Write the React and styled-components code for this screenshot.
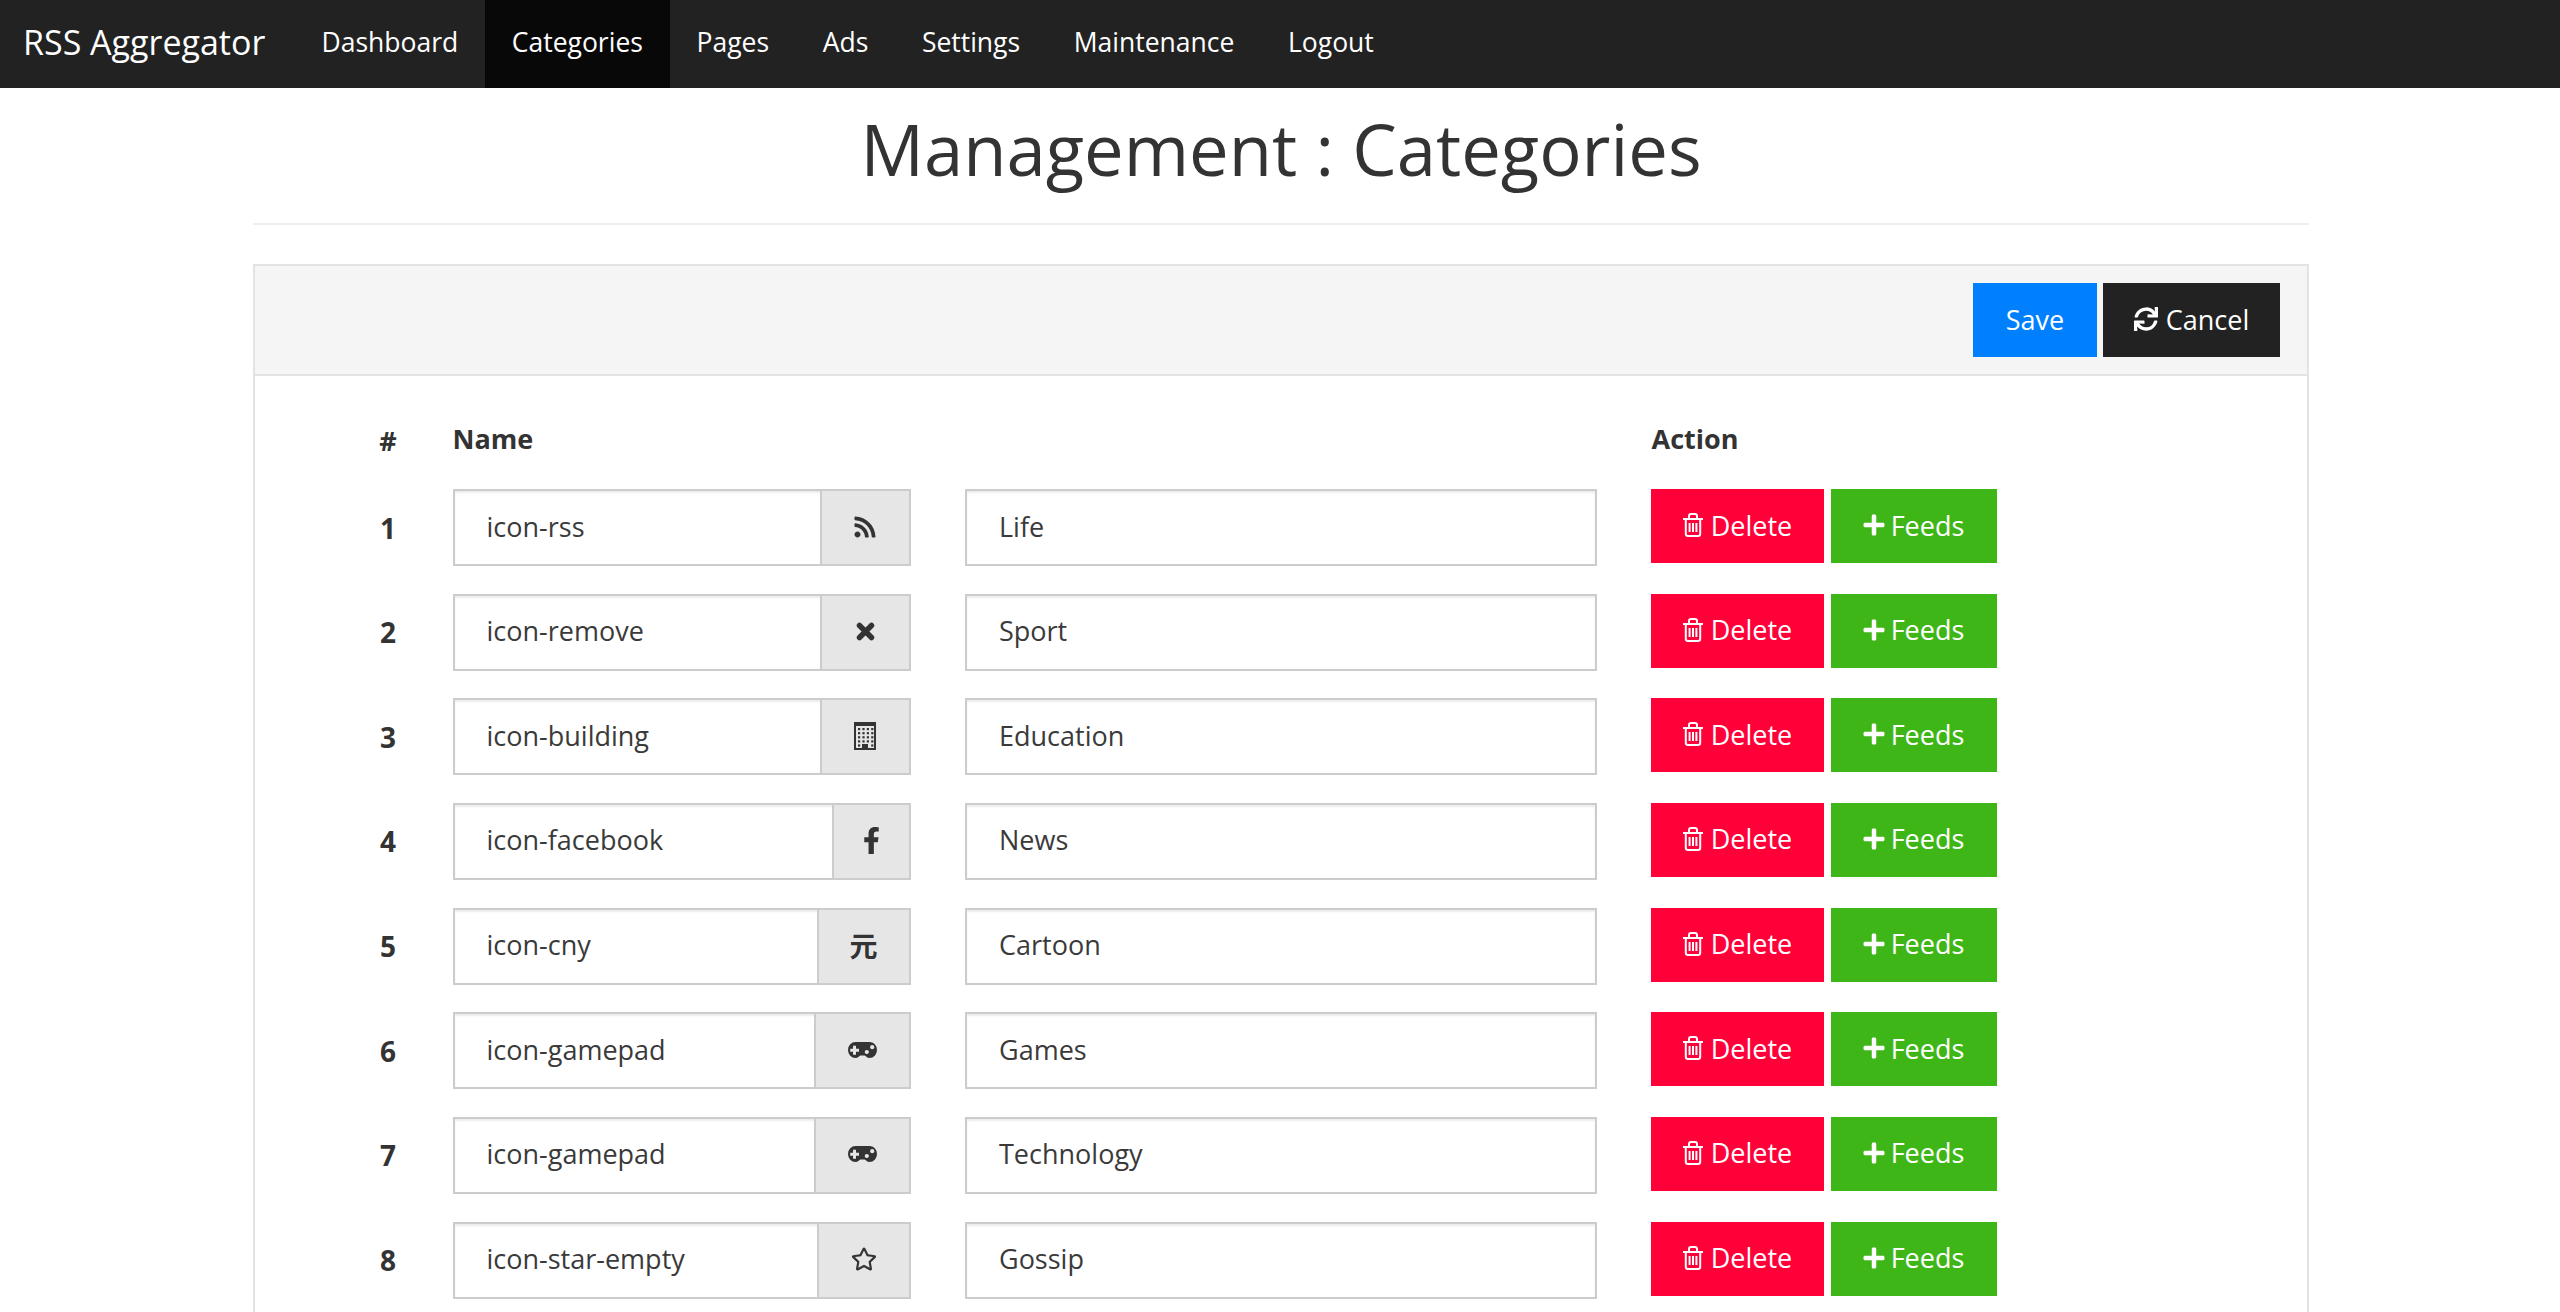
import React from 'react'
import styled, { createGlobalStyle } from 'styled-components'
import { FaRss, FaFacebookF, FaRegStar, FaPlus, FaSync } from 'react-icons/fa'

const GlobalStyle = createGlobalStyle`
  html, body {
    margin: 0;
    height: 100%;
    overflow: hidden;
    background: #fff;
    font-family: "Open Sans", "Liberation Sans", sans-serif;
    color: #333;
  }
  * { box-sizing: border-box; }
`

const Navbar = styled.nav`
  display: flex;
  height: 88px;
  background: #222;
  padding-left: 23px;
`

const Brand = styled.a`
  color: #fff;
  font-size: 34px;
  line-height: 84px;
  margin-right: 29.3px;
`

const NavLink = styled.a`
  display: block;
  color: #fff;
  font-size: 26.5px;
  line-height: 84px;
  padding: 0 26.8px;
  background: ${(p) => (p.$active ? '#080808' : 'transparent')};
`

const Container = styled.main`
  padding: 0 251px 0 253px;
`

const Title = styled.h1`
  margin: 0;
  height: 137px;
  border-bottom: 2px solid #eee;
  font-size: 70.6px;
  font-weight: 400;
  line-height: 123px;
  text-align: center;
`

const Panel = styled.section`
  margin-top: 39px;
  border: 2px solid #e3e3e3;
  border-bottom: 0;
`

const PanelHead = styled.div`
  display: flex;
  justify-content: flex-end;
  gap: 6px;
  height: 110px;
  padding: 17px 27px 0 0;
  background: #f5f5f5;
  border-bottom: 2px solid #e3e3e3;
`

const Button = styled.button`
  display: inline-flex;
  align-items: center;
  justify-content: center;
  gap: ${(p) => p.$gap || 8}px;
  height: 74px;
  width: ${(p) => p.$width}px;
  border: 0;
  padding: 0 ${(p) => p.$shift || 0}px 2px 0;
  background: ${(p) => p.$bg};
  color: #fff;
  font-family: inherit;
  font-size: 27px;
  svg { flex: none; }
`

const Body = styled.div`
  padding: 42px 0 60px 123px;
`

const Row = styled.div`
  display: grid;
  grid-template-columns: 20px 458px 632px auto;
  column-gap: 54.5px;
  align-items: center;
  height: 77px;
  margin-bottom: 27.67px;
`

const HeadRow = styled(Row)`
  height: 40px;
  margin-bottom: 31px;
`

const Th = styled.div`
  font-size: 27px;
  font-weight: 700;
`

const Hash = styled(Th)`
  margin-top: 4px;
  text-align: center;
`

const Num = styled(Th)`
  font-size: 28px;
  text-align: center;
`

const InputGroup = styled.div`
  display: flex;
  height: 77px;
  border: 2px solid #ccc;
  box-shadow: inset 0 2px 2px rgba(0, 0, 0, 0.075);
`

const Input = styled.div`
  flex: 1;
  display: flex;
  align-items: center;
  padding: 0 0 3px 32px;
  font-size: 27px;
  color: #3a3a3a;
`

const NameInput = styled(Input)`
  height: 77px;
  border: 2px solid #ccc;
  box-shadow: inset 0 2px 2px rgba(0, 0, 0, 0.075);
`

const Addon = styled.div`
  flex: none;
  display: flex;
  align-items: center;
  justify-content: center;
  width: ${(p) => p.$width}px;
  padding-bottom: 2px;
  border-left: 2px solid #ccc;
  background: #e6e6e6;
  color: #333;
  font-size: 28px;
  font-weight: 700;
  font-family: "Noto Sans CJK SC", sans-serif;
`

const Actions = styled.div`
  display: flex;
  gap: 7px;
  align-self: start;
  margin-left: -0.5px;
`

const RemoveIcon = () => (
  <svg width="19" height="19" viewBox="0 0 19 19" stroke="#333" strokeWidth="5.5" strokeLinecap="round">
    <path d="M3.5 3.5 15.5 15.5M15.5 3.5 3.5 15.5" />
  </svg>
)

const BuildingIcon = () => (
  <svg width="22" height="28" viewBox="0 0 22 28" fill="#333">
    <rect x="1" y="1" width="20" height="26" fill="none" stroke="#333" strokeWidth="2" />
    <rect x="1" y="1" width="20" height="3" />
    {[0, 1, 2, 3, 4].map((r) =>
      [0, 1, 2, 3].map((c) =>
        r === 4 && (c === 1 || c === 2) ? null : (
          <rect key={`${r}-${c}`} x={4 + c * 4.4} y={6 + r * 4.1} width="2.2" height="2.2" />
        )
      )
    )}
    <rect x="8" y="22" width="6" height="6" />
  </svg>
)

const GamepadIcon = () => (
  <svg width="29" height="16" viewBox="0 0 29 16">
    <path d="M7.5 0H21.5A7.5 8 0 0 1 21.5 16C19 16 18 14 16.5 13.5H12.5C11 14 10 16 7.5 16A7.5 8 0 0 1 7.5 0Z" fill="#333" />
    <path d="M5 3.8H8V6.8H11V9.8H8V12.8H5V9.8H2.2V6.8H5Z" fill="#e6e6e6" />
    <circle cx="18.8" cy="10" r="2.1" fill="#e6e6e6" />
    <circle cx="24.2" cy="5.2" r="2.1" fill="#e6e6e6" />
  </svg>
)

const TrashIcon = () => (
  <svg width="20" height="24" viewBox="0 0 20 24" fill="none" stroke="#fff" strokeWidth="2">
    <path d="M0 6H20M6 6V3.2Q6 1 8 1H12Q14 1 14 3.2V6M2.8 6V20.8Q2.8 23 5 23H15Q17.2 23 17.2 20.8V6M6.6 10V19M10 10V19M13.4 10V19" />
  </svg>
)

const navItems = ['Dashboard', 'Categories', 'Pages', 'Ads', 'Settings', 'Maintenance', 'Logout']

const rows = [
  { name: 'icon-rss', label: 'Life', width: 89, icon: <FaRss size={24} /> },
  { name: 'icon-remove', label: 'Sport', width: 89, icon: <RemoveIcon /> },
  { name: 'icon-building', label: 'Education', width: 89, icon: <BuildingIcon /> },
  { name: 'icon-facebook', label: 'News', width: 77, icon: <FaFacebookF size={27} /> },
  { name: 'icon-cny', label: 'Cartoon', width: 92, icon: '元' },
  { name: 'icon-gamepad', label: 'Games', width: 95, icon: <GamepadIcon /> },
  { name: 'icon-gamepad', label: 'Technology', width: 95, icon: <GamepadIcon /> },
  { name: 'icon-star-empty', label: 'Gossip', width: 92, icon: <FaRegStar size={26} /> },
]

export default function App() {
  return (
    <>
      <GlobalStyle />
      <Navbar>
        <Brand>RSS Aggregator</Brand>
        {navItems.map((item) => (
          <NavLink key={item} $active={item === 'Categories'}>{item}</NavLink>
        ))}
      </Navbar>
      <Container>
        <Title>Management : Categories</Title>
        <Panel>
          <PanelHead>
            <Button $bg="#007fff" $width={124}>Save</Button>
            <Button $bg="#222" $width={177}><FaSync size={24} />Cancel</Button>
          </PanelHead>
          <Body>
            <HeadRow>
              <Hash>#</Hash>
              <Th>Name</Th>
              <div />
              <Th>Action</Th>
            </HeadRow>
            {rows.map((row, i) => (
              <Row key={i}>
                <Num>{i + 1}</Num>
                <InputGroup>
                  <Input>{row.name}</Input>
                  <Addon $width={row.width}>{row.icon}</Addon>
                </InputGroup>
                <NameInput>{row.label}</NameInput>
                <Actions>
                  <Button $bg="#ff0039" $width={173}><TrashIcon />Delete</Button>
                  <Button $bg="#3fb618" $width={166} $gap={5} $shift={2}><FaPlus size={24} />Feeds</Button>
                </Actions>
              </Row>
            ))}
          </Body>
        </Panel>
      </Container>
    </>
  )
}
